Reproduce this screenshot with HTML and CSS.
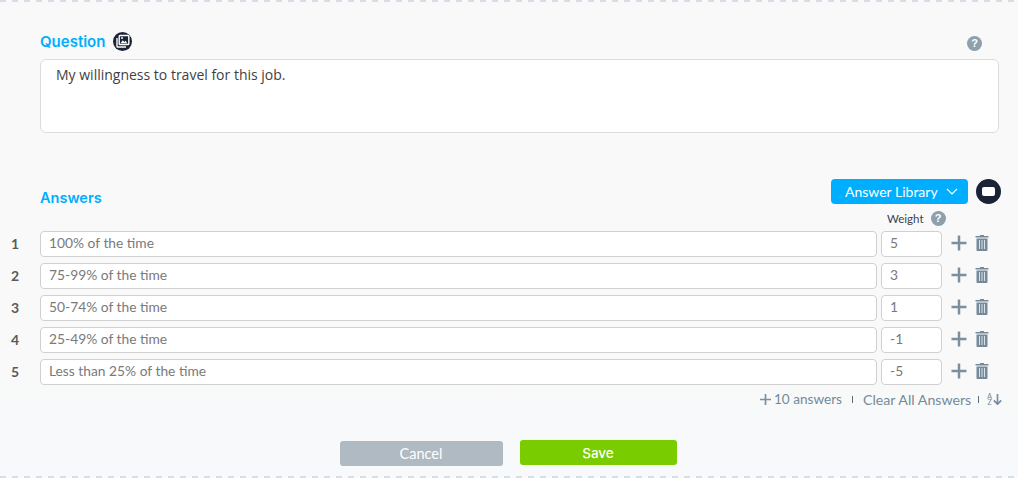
FILE: index.html
```html
<!DOCTYPE html>
<html lang="en">
<head>
  <meta charset="UTF-8" />
  <title>Question editor</title>
  <link rel="stylesheet" href="styles.css">
</head>
<body>

  <div class="editor">

    <div class="question-head">
      <span class="section-title">Question</span>
      <span class="round-icon image-icon">
        <svg width="14" height="14" viewBox="0 0 14 14">
          <path d="M4 1.500h8a.8.8 0 0 1 .8.8v7.400a.8.8 0 0 1-.8.8H4a.8.8 0 0 1-.8-.8V2.300a.8.8 0 0 1 .8-.8z" fill="none" stroke="#fff" stroke-width="1.400"/>
          <path d="M1 4v8.200a.8.8 0 0 0 .8.8H10" fill="none" stroke="#fff" stroke-width="1.400"/>
          <path d="M4.500 9.300l2.300-3 1.500 1.700 1.200-1.200 1.800 2.500z" fill="#fff"/>
          <circle cx="6" cy="4" r="1" fill="#fff"/>
        </svg>
      </span>
      <span class="help-icon help-large">?</span>
    </div>

    <div class="question-box">My willingness to travel for this job.</div>

    <div class="answers-head">
      <span class="section-title answers-title">Answers</span>
      <div class="answers-tools">
        <button class="library-button">
          Answer Library
          <svg width="12" height="7" viewBox="0 0 12 7"><path d="M1 1l5 5 5-5" fill="none" stroke="#fff" stroke-width="1.200"/></svg>
        </button>
        <span class="round-icon card-icon"><span class="card-shape"></span></span>
      </div>
    </div>

    <div class="weight-head">
      <span class="weight-label">Weight</span>
      <span class="help-icon">?</span>
    </div>

    <div class="answer-list">
      <div class="answer-row">
        <span class="answer-num">1</span>
        <div class="field answer-text">100% of the time</div>
        <div class="field answer-weight">5</div>
        <svg class="plus" width="16" height="16" viewBox="0 0 16 16"><path d="M8 0.500v15M0.500 8h15" stroke="#7b8f9e" stroke-width="2.500"/></svg>
        <svg class="trash" width="14" height="16" viewBox="0 0 14 16"><path d="M5 0h4v1h4.500v1.500H.5V1H5zM1.500 3.500h11V15a1 1 0 0 1-1 1h-9a1 1 0 0 1-1-1z" fill="#748a9b"/><path d="M4.500 5v9M7 5v9M9.500 5v9" stroke="#f9f9f9" stroke-width=".8"/></svg>
      </div>
      <div class="answer-row">
        <span class="answer-num">2</span>
        <div class="field answer-text">75-99% of the time</div>
        <div class="field answer-weight">3</div>
        <svg class="plus" width="16" height="16" viewBox="0 0 16 16"><path d="M8 0.500v15M0.500 8h15" stroke="#7b8f9e" stroke-width="2.500"/></svg>
        <svg class="trash" width="14" height="16" viewBox="0 0 14 16"><path d="M5 0h4v1h4.500v1.500H.5V1H5zM1.500 3.500h11V15a1 1 0 0 1-1 1h-9a1 1 0 0 1-1-1z" fill="#748a9b"/><path d="M4.500 5v9M7 5v9M9.500 5v9" stroke="#f9f9f9" stroke-width=".8"/></svg>
      </div>
      <div class="answer-row">
        <span class="answer-num">3</span>
        <div class="field answer-text">50-74% of the time</div>
        <div class="field answer-weight">1</div>
        <svg class="plus" width="16" height="16" viewBox="0 0 16 16"><path d="M8 0.500v15M0.500 8h15" stroke="#7b8f9e" stroke-width="2.500"/></svg>
        <svg class="trash" width="14" height="16" viewBox="0 0 14 16"><path d="M5 0h4v1h4.500v1.500H.5V1H5zM1.500 3.500h11V15a1 1 0 0 1-1 1h-9a1 1 0 0 1-1-1z" fill="#748a9b"/><path d="M4.500 5v9M7 5v9M9.500 5v9" stroke="#f9f9f9" stroke-width=".8"/></svg>
      </div>
      <div class="answer-row">
        <span class="answer-num">4</span>
        <div class="field answer-text">25-49% of the time</div>
        <div class="field answer-weight">-1</div>
        <svg class="plus" width="16" height="16" viewBox="0 0 16 16"><path d="M8 0.500v15M0.500 8h15" stroke="#7b8f9e" stroke-width="2.500"/></svg>
        <svg class="trash" width="14" height="16" viewBox="0 0 14 16"><path d="M5 0h4v1h4.500v1.500H.5V1H5zM1.500 3.500h11V15a1 1 0 0 1-1 1h-9a1 1 0 0 1-1-1z" fill="#748a9b"/><path d="M4.500 5v9M7 5v9M9.500 5v9" stroke="#f9f9f9" stroke-width=".8"/></svg>
      </div>
      <div class="answer-row">
        <span class="answer-num">5</span>
        <div class="field answer-text">Less than 25% of the time</div>
        <div class="field answer-weight">-5</div>
        <svg class="plus" width="16" height="16" viewBox="0 0 16 16"><path d="M8 0.500v15M0.500 8h15" stroke="#7b8f9e" stroke-width="2.500"/></svg>
        <svg class="trash" width="14" height="16" viewBox="0 0 14 16"><path d="M5 0h4v1h4.500v1.500H.5V1H5zM1.500 3.500h11V15a1 1 0 0 1-1 1h-9a1 1 0 0 1-1-1z" fill="#748a9b"/><path d="M4.500 5v9M7 5v9M9.500 5v9" stroke="#f9f9f9" stroke-width=".8"/></svg>
      </div>
    </div>

    <div class="answer-actions">
      <span class="action-link add-link">
        <svg width="11" height="11" viewBox="0 0 11 11"><path d="M5.500 0v11M0 5.500h11" stroke="#7b8f9e" stroke-width="1.700"/></svg>
        10 answers
      </span>
      <span class="action-sep wide"></span>
      <span class="action-link">Clear All Answers</span>
      <span class="action-sep"></span>
      <span class="sort-icon">
        <span class="sort-letters">A<br>Z</span>
        <svg width="9" height="11" viewBox="0 0 9 11"><path d="M4.500 0v10M.8 6.300l3.700 3.900 3.700-3.900" fill="none" stroke="#7b8f9e" stroke-width="1.700"/></svg>
      </span>
    </div>

    <div class="form-buttons">
      <button class="cancel-button">Cancel</button>
      <button class="save-button">Save</button>
    </div>

  </div>

</body>
</html>
```

FILE: styles.css
```css
* {
  box-sizing: border-box;
}
html, body {
  margin: 0;
  height: 480px;
  overflow: hidden;
}
body {
  font-family: "Lato", Arial, sans-serif;
  background-color: #fff;
}
/* dashed edges are 6px on, 6px off, wider than a 2px dashed border draws them */
.editor {
  height: 478px;
  padding: 31px 17px 0 0;
  background-color: #f9f9f9;
  background-image:
    linear-gradient(90deg, #d8dee8 6px, transparent 6px),
    linear-gradient(90deg, #d8dee8 6px, transparent 6px),
    linear-gradient(#f9f9f9 380px, #f8f9fc);
  background-size: 12px 2px, 12px 2px, 100% 100%;
  background-position: 0 0, 0 100%, 0 0;
  background-repeat: repeat-x, repeat-x, no-repeat;
}
.question-head {
  display: flex;
  align-items: center;
  height: 20px;
  padding-left: 40px;
}
.section-title {
  font-family: "Inter", Arial, sans-serif;
  font-size: 15px;
  font-weight: 600;
  color: #00aeff;
}
.round-icon {
  display: flex;
  align-items: center;
  justify-content: center;
  border-radius: 50%;
  background-color: #1b2337;
}
.image-icon {
  width: 19px;
  height: 19px;
  margin-left: 8px;
}
.help-icon {
  display: inline-flex;
  align-items: center;
  justify-content: center;
  width: 15px;
  height: 15px;
  border-radius: 50%;
  background-color: #8ca0ad;
  color: #fff;
  font-family: "Liberation Sans", Arial, sans-serif;
  font-size: 11px;
  font-weight: bold;
}
.help-large {
  margin-left: auto;
  margin-right: 19px;
  margin-top: 4px;
}
.question-box {
  height: 74px;
  margin: 8px 2px 0 40px;
  padding: 5px 15px;
  background-color: #fff;
  border: 1px solid #dcdcdc;
  border-radius: 6px;
  font-family: "Open Sans", Arial, sans-serif;
  font-size: 14px;
  line-height: 20px;
  color: #3f3f3f;
}
.answers-head {
  display: flex;
  align-items: center;
  justify-content: space-between;
  height: 25px;
  margin-top: 46px;
  padding-left: 40px;
}
.answers-title {
  margin-top: 12px;
  font-size: 14.500px;
}
.answers-tools {
  display: flex;
  align-items: center;
  gap: 8px;
}
.library-button {
  display: flex;
  align-items: center;
  gap: 8px;
  width: 137px;
  height: 25px;
  padding: 0 0 0 14px;
  background-color: #00aeff;
  border: none;
  border-radius: 4px;
  color: #fff;
  font-family: "Lato", Arial, sans-serif;
  font-size: 14px;
}
.card-icon {
  width: 25px;
  height: 25px;
}
.card-shape {
  width: 13px;
  height: 9px;
  background-color: #fff;
  border-radius: 2px;
}
.weight-head {
  display: flex;
  align-items: center;
  gap: 7px;
  height: 20px;
  margin-top: 4px;
  padding-left: 887px;
}
.weight-label {
  font-size: 11.500px;
  color: #3b4252;
}
.answer-list {
  display: flex;
  flex-direction: column;
  gap: 6px;
  margin-top: 3px;
}
.answer-row {
  display: flex;
  align-items: center;
  height: 26px;
}
.answer-num {
  width: 40px;
  margin-bottom: 2px;
  padding-left: 11px;
  font-size: 14px;
  font-weight: bold;
  color: #5a5a5a;
}
.field {
  height: 26px;
  background-color: #fff;
  border: 1px solid #d0d0d0;
  border-radius: 4px;
  padding: 0 8px;
  font-size: 13.800px;
  line-height: 22px;
  color: #7a7a7a;
}
.answer-text {
  width: 837px;
}
.answer-weight {
  width: 61px;
  margin-left: 4px;
}
.plus {
  margin-left: 9px;
  margin-bottom: 2px;
}
.trash {
  margin-left: 8px;
  margin-bottom: 2px;
}
.answer-actions {
  display: flex;
  align-items: center;
  justify-content: flex-end;
  height: 20px;
  margin-top: 4px;
  margin-right: -1px;
  font-size: 14.200px;
  color: #748a9b;
}
.action-link {
  display: flex;
  align-items: center;
  gap: 3px;
}
.add-link {
  font-size: 13.600px;
}
.action-sep {
  width: 1px;
  height: 7px;
  margin: 1px 8px 0 7px;
  background-color: #5a6b78;
}
.action-sep.wide {
  margin: 1px 10px 0 10px;
}
.sort-icon {
  display: flex;
  align-items: center;
  gap: 1px;
}
.sort-letters {
  font-size: 7px;
  line-height: 6px;
  text-align: center;
}
.form-buttons {
  display: flex;
  justify-content: center;
  align-items: flex-start;
  gap: 17px;
  margin-top: 31px;
  padding-left: 15px;
}
.cancel-button, .save-button {
  height: 25px;
  border: none;
  border-radius: 3px;
  color: #fff;
  font-family: "Lato", Arial, sans-serif;
  font-size: 14.500px;
}
.cancel-button {
  width: 163px;
  margin-top: 1px;
  background-color: #b0bac3;
}
.save-button {
  width: 157px;
  background-color: #78cc00;
  font-family: "Inter", Arial, sans-serif;
  font-size: 13.500px;
  font-weight: 500;
}
```
